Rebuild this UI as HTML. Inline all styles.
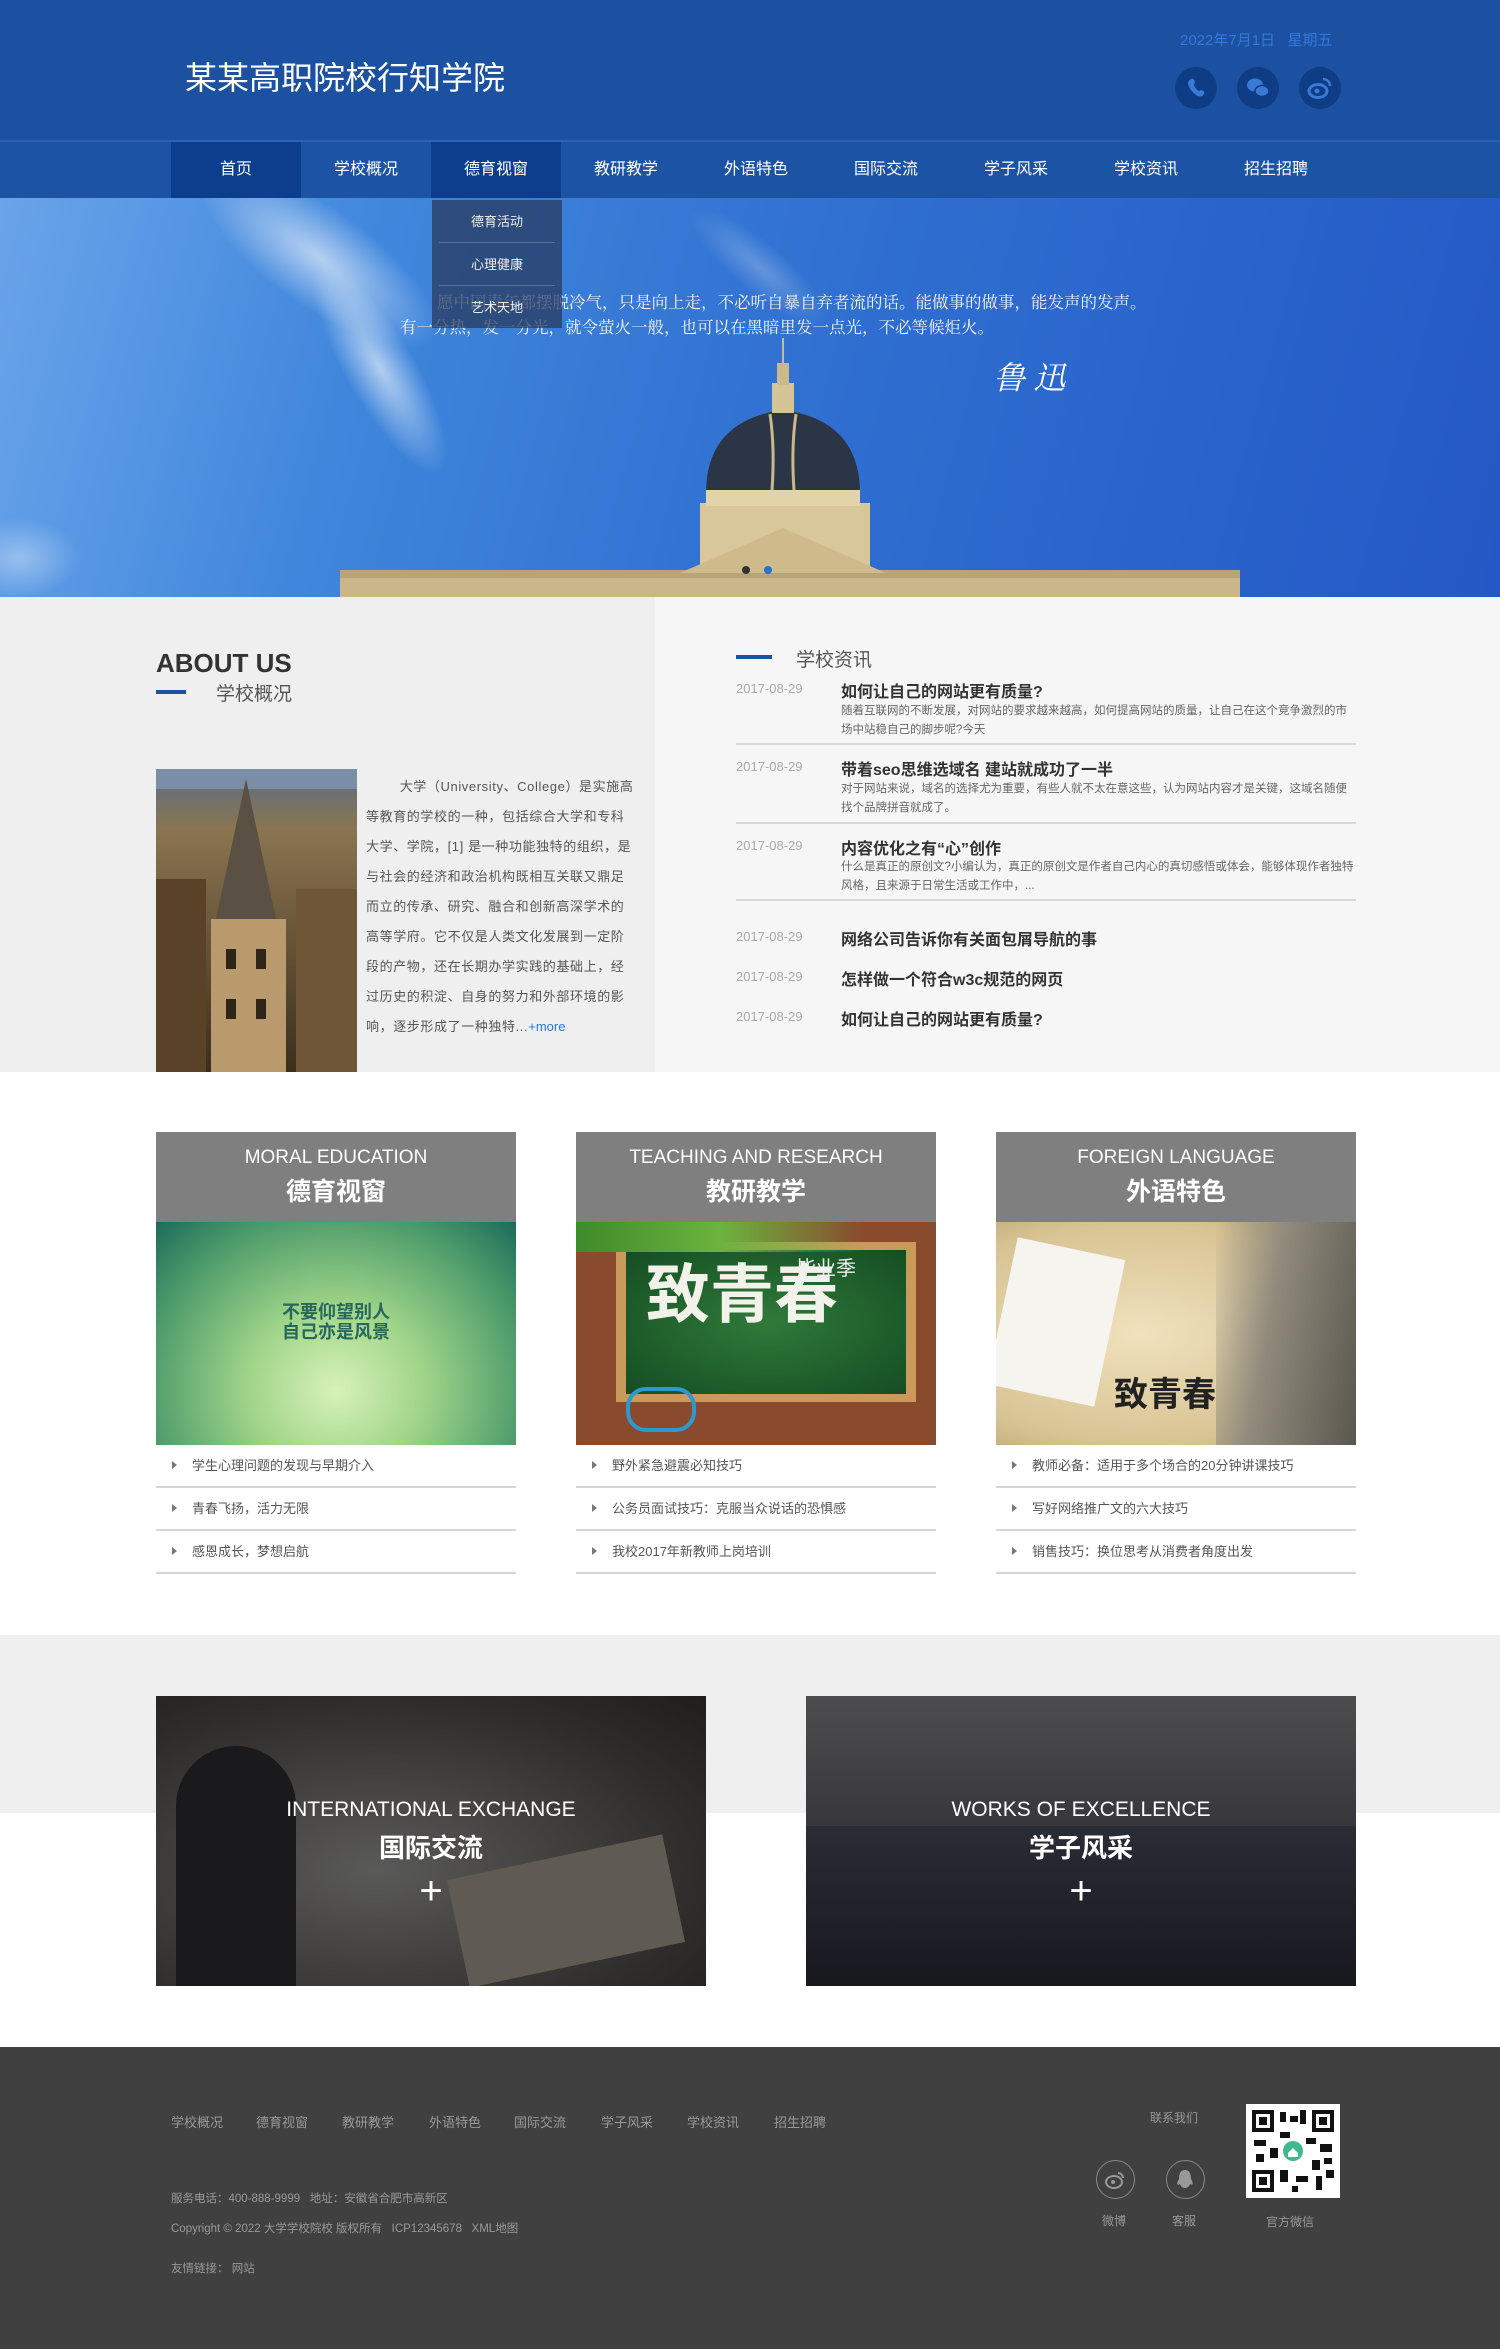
<!DOCTYPE html>
<html><head><meta charset="utf-8">
<style>
*{margin:0;padding:0;box-sizing:border-box}
body{width:1500px;height:2349px;position:relative;font-family:"Liberation Sans","Noto Sans CJK SC",sans-serif;background:#fff;overflow:hidden}
.a{position:absolute;white-space:nowrap}
.hd{position:absolute;left:0;top:0;width:1500px;height:140px;background:#1b51a0}
.nav{position:absolute;left:0;top:140px;width:1500px;height:58px;background:#1c53a5;border-top:2px solid #2a64b8}
.ni{position:absolute;top:0;width:130px;height:56px;line-height:56px;text-align:center;color:#fff;font-size:16px}
.ni.on{background:#0b3f8e}
.ic{position:absolute;width:42px;height:42px;border-radius:50%;background:#0e3c85;top:67px}
.banner{position:absolute;left:0;top:198px;width:1500px;height:399px;background:linear-gradient(105deg,#6aa4ea 0%,#3f86dc 25%,#2f6fd0 55%,#2458c6 100%);overflow:hidden}
.dd{position:absolute;left:432px;top:200px;width:130px;height:128px;background:rgba(40,55,90,.72)}
.dd div{height:43px;line-height:43px;text-align:center;color:#eee;font-size:13px;margin:0 7px;border-bottom:1px solid rgba(255,255,255,.2)}
.quote{font-family:"Liberation Serif","Noto Serif CJK SC",serif;color:#f2f4fa;font-size:16.5px}
.left{position:absolute;left:0;top:597px;width:655px;height:475px;background:#efefef}
.right{position:absolute;left:655px;top:597px;width:845px;height:475px;background:#f6f6f6}
.date{color:#aaa;font-size:13px}
.nt{color:#333;font-size:16px;font-weight:bold}
.nd{color:#666;font-size:11.5px}
.hr{position:absolute;left:736px;width:620px;height:2px;background:#d8d8d8}
.card{position:absolute;top:1132px;width:360px}
.ch{height:90px;background:#7f7f7f;color:#fff;text-align:center}
.ch .en{font-size:19px;padding-top:15px}
.ch .cn{font-size:25px;font-weight:bold;margin-top:3px}
.cimg{height:223px;position:relative;overflow:hidden}
.li{height:43px;line-height:41px;border-bottom:2px solid #d5d5d5;font-size:13px;color:#555;padding-left:36px;position:relative}
.li:before{content:"";position:absolute;left:16px;top:16px;border-left:5px solid #777;border-top:4px solid transparent;border-bottom:4px solid transparent}
.ph{position:absolute;top:1696px;width:550px;height:290px;overflow:hidden;text-align:center;color:#fff}
.ph .en{font-size:21px;margin-top:102px;position:relative}
.ph .cn{font-size:26px;font-weight:bold;margin-top:6px;position:relative}
.ph .pl{font-size:40px;margin-top:6px;position:relative;line-height:40px}
.ft{position:absolute;left:0;top:2047px;width:1500px;height:302px;background:#404040}
.fl{color:#999;font-size:13px}
</style></head><body>
<div class="hd"></div>
<div class="a" style="left:185px;top:53px;font-size:32px;color:#fff">某某高职院校行知学院</div>
<div class="a" style="left:1180px;top:29px;font-size:15px;color:#3577db">2022年7月1日&nbsp;&nbsp;&nbsp;星期五</div>
<div class="ic" style="left:1175px"><svg width="42" height="42" viewBox="0 0 42 42"><path d="M16 12c2-1 3 0 4 3l-1 3c1 3 3 5 5 6l2-1c3 1 4 2 3 4-2 3-5 3-8 1-4-3-7-7-8-11 0-2 1-4 3-5z" fill="#3a7ad6"/></svg></div>
<div class="ic" style="left:1237px"><svg width="42" height="42" viewBox="0 0 42 42"><ellipse cx="18" cy="18" rx="8" ry="6.5" fill="#3a7ad6"/><ellipse cx="25" cy="24" rx="7" ry="5.5" fill="#3a7ad6" stroke="#0e3c85" stroke-width="1.5"/></svg></div>
<div class="ic" style="left:1299px"><svg width="42" height="42" viewBox="0 0 42 42"><ellipse cx="19" cy="24" rx="9" ry="6.5" fill="none" stroke="#3a7ad6" stroke-width="3"/><circle cx="18" cy="24" r="2.5" fill="#3a7ad6"/><path d="M24 12a7 7 0 0 1 7 7" stroke="#3a7ad6" stroke-width="2.5" fill="none"/></svg></div>
<div class="nav">
<div class="ni on" style="left:171px">首页</div><div class="ni" style="left:301px">学校概况</div><div class="ni on" style="left:431px">德育视窗</div><div class="ni" style="left:561px">教研教学</div><div class="ni" style="left:691px">外语特色</div><div class="ni" style="left:821px">国际交流</div><div class="ni" style="left:951px">学子风采</div><div class="ni" style="left:1081px">学校资讯</div><div class="ni" style="left:1211px">招生招聘</div>
</div>
<div class="banner">
<svg width="1500" height="399" style="position:absolute;left:0;top:0">
<defs><radialGradient id="cl"><stop offset="0" stop-color="#fff" stop-opacity=".6"/><stop offset="1" stop-color="#fff" stop-opacity="0"/></radialGradient></defs>
<ellipse cx="320" cy="60" rx="140" ry="50" fill="url(#cl)" transform="rotate(35 320 60)"/>
<ellipse cx="380" cy="170" rx="120" ry="35" fill="url(#cl)" transform="rotate(60 380 170)"/>
<ellipse cx="760" cy="70" rx="90" ry="25" fill="url(#cl)" opacity=".4" transform="rotate(40 760 70)"/>
<ellipse cx="20" cy="360" rx="60" ry="40" fill="url(#cl)" opacity=".6"/>
<rect x="340" y="378" width="900" height="21" fill="#c9b78a"/>
<rect x="340" y="372" width="900" height="8" fill="#b7a477"/>
<rect x="700" y="305" width="170" height="70" fill="#d8c79a"/>
<polygon points="680,375 783,330 886,375" fill="#cdbb8c"/>
<rect x="706" y="290" width="154" height="18" fill="#e2d3a8"/>
<path d="M706 292 Q708 222 783 212 Q858 222 860 292Z" fill="#2c3546"/>
<path d="M770 216 Q775 250 772 292 M796 216 Q791 250 794 292" stroke="#c8b88c" stroke-width="3" fill="none"/>
<rect x="772" y="185" width="22" height="30" fill="#d5c596"/>
<rect x="777" y="165" width="12" height="22" fill="#cbb98a"/>
<line x1="783" y1="140" x2="783" y2="165" stroke="#cbb98a" stroke-width="2"/>
<circle cx="746" cy="372" r="4" fill="#333"/><circle cx="768" cy="372" r="4" fill="#2a6fd6"/>
</svg>
<div class="a quote" style="left:437px;top:91px">愿中国青年都摆脱冷气，只是向上走，不必听自暴自弃者流的话。能做事的做事，能发声的发声。</div>
<div class="a quote" style="left:400px;top:116px">有一分热，发一分光，就令萤火一般，也可以在黑暗里发一点光，不必等候炬火。</div>
<div class="a" style="left:993px;top:155px;font-size:32px;color:#fff;font-family:'Noto Serif CJK SC',serif;font-style:italic">鲁 迅</div>
</div>
<div class="dd"><div>德育活动</div><div>心理健康</div><div style="border:0">艺术天地</div></div>

<div class="left"></div><div class="right"></div>
<div class="a" style="left:156px;top:648px;font-size:26px;font-weight:bold;color:#333">ABOUT US</div>
<div class="a" style="left:156px;top:690px;width:30px;height:4px;background:#1b51a0"></div>
<div class="a" style="left:216px;top:679px;font-size:19px;color:#555">学校概况</div>
<svg class="a" style="left:156px;top:769px" width="201" height="303"><defs><linearGradient id="bd" x1="0" y1="0" x2="0" y2="1"><stop offset="0" stop-color="#5a6e88"/><stop offset=".2" stop-color="#8a7550"/><stop offset="1" stop-color="#3d2e1c"/></linearGradient></defs><rect width="201" height="303" fill="url(#bd)"/><rect x="0" y="0" width="201" height="20" fill="#7a8ea8"/><polygon points="60,150 90,10 120,150" fill="#5b5044"/><rect x="55" y="150" width="75" height="153" fill="#b89a6c"/><rect x="140" y="120" width="61" height="183" fill="#6e5636"/><rect x="0" y="110" width="50" height="193" fill="#5a4228"/><g fill="#2e2518"><rect x="70" y="180" width="10" height="20"/><rect x="100" y="180" width="10" height="20"/><rect x="70" y="230" width="10" height="20"/><rect x="100" y="230" width="10" height="20"/></g></svg>
<div class="a" style="left:366px;top:772px;width:270px;white-space:normal;font-size:13px;letter-spacing:0.6px;line-height:30px;color:#555">&nbsp;&nbsp;&nbsp;&nbsp;&nbsp;&nbsp;&nbsp;&nbsp;大学（University、College）是实施高等教育的学校的一种，包括综合大学和专科大学、学院，[1] 是一种功能独特的组织，是与社会的经济和政治机构既相互关联又鼎足而立的传承、研究、融合和创新高深学术的高等学府。它不仅是人类文化发展到一定阶段的产物，还在长期办学实践的基础上，经过历史的积淀、自身的努力和外部环境的影响，逐步形成了一种独特...<span style="color:#2a7ad6;letter-spacing:0">+more</span></div>

<div class="a" style="left:736px;top:655px;width:36px;height:4px;background:#1b51a0"></div>
<div class="a" style="left:796px;top:645px;font-size:19px;color:#555">学校资讯</div>
<div class="a date" style="left:736px;top:681px">2017-08-29</div><div class="a nt" style="left:841px;top:678px">如何让自己的网站更有质量?</div>
<div class="a nd" style="left:841px;top:702px;line-height:19px;white-space:normal;width:515px">随着互联网的不断发展，对网站的要求越来越高，如何提高网站的质量，让自己在这个竞争激烈的市场中站稳自己的脚步呢?今天</div>
<div class="hr" style="top:743px"></div>
<div class="a date" style="left:736px;top:759px">2017-08-29</div><div class="a nt" style="left:841px;top:756px">带着seo思维选域名 建站就成功了一半</div>
<div class="a nd" style="left:841px;top:780px;line-height:19px;white-space:normal;width:515px">对于网站来说，域名的选择尤为重要，有些人就不太在意这些，认为网站内容才是关键，这域名随便找个品牌拼音就成了。</div>
<div class="hr" style="top:822px"></div>
<div class="a date" style="left:736px;top:838px">2017-08-29</div><div class="a nt" style="left:841px;top:835px">内容优化之有“心”创作</div>
<div class="a nd" style="left:841px;top:858px;line-height:19px;white-space:normal;width:515px">什么是真正的原创文?小编认为，真正的原创文是作者自己内心的真切感悟或体会，能够体现作者独特风格，且来源于日常生活或工作中，...</div>
<div class="hr" style="top:899px"></div>
<div class="a date" style="left:736px;top:929px">2017-08-29</div><div class="a nt" style="left:841px;top:926px">网络公司告诉你有关面包屑导航的事</div>
<div class="a date" style="left:736px;top:969px">2017-08-29</div><div class="a nt" style="left:841px;top:966px">怎样做一个符合w3c规范的网页</div>
<div class="a date" style="left:736px;top:1009px">2017-08-29</div><div class="a nt" style="left:841px;top:1006px">如何让自己的网站更有质量?</div>

<div class="card" style="left:156px"><div class="ch"><div class="en">MORAL EDUCATION</div><div class="cn">德育视窗</div></div>
<div class="cimg" style="background:radial-gradient(ellipse at 50% 75%,#d8f2b8 0%,#9fd489 35%,#4b9a6a 75%,#1d6a5a 100%)"><div class="a" style="left:0;width:360px;text-align:center;top:80px;font-size:18px;font-weight:bold;color:#27685a;line-height:20px">不要仰望别人<br>自己亦是风景</div></div>
<div class="li">学生心理问题的发现与早期介入</div><div class="li">青春飞扬，活力无限</div><div class="li">感恩成长，梦想启航</div></div>

<div class="card" style="left:576px"><div class="ch"><div class="en">TEACHING AND RESEARCH</div><div class="cn">教研教学</div></div>
<div class="cimg" style="background:#8a4a2e"><div class="a" style="left:40px;top:20px;width:300px;height:160px;background:#c99a5a"></div><div class="a" style="left:50px;top:28px;width:280px;height:144px;background:radial-gradient(#2f7a3a,#154d22)"></div><div class="a" style="left:0;top:0;width:360px;height:30px;background:linear-gradient(90deg,#3f8a2a,#6cb33e 40%,transparent 80%)"></div><div class="a" style="left:70px;top:38px;font-size:64px;font-weight:bold;color:#f2f2ea;line-height:70px">致青春</div><div class="a" style="left:220px;top:30px;font-size:20px;color:#eee">毕业季</div><div class="a" style="left:50px;top:165px;width:70px;height:45px;border:4px solid #2a9ad0;border-radius:20px"></div></div>
<div class="li">野外紧急避震必知技巧</div><div class="li">公务员面试技巧：克服当众说话的恐惧感</div><div class="li">我校2017年新教师上岗培训</div></div>

<div class="card" style="left:996px"><div class="ch"><div class="en">FOREIGN LANGUAGE</div><div class="cn">外语特色</div></div>
<div class="cimg" style="background:radial-gradient(ellipse at 40% 50%,#f0e2bd,#d8c393 70%,#b8a274)"><div class="a" style="left:5px;top:25px;width:110px;height:150px;background:#f6f4ee;transform:rotate(12deg)"></div><div class="a" style="left:220px;top:0;width:140px;height:223px;background:linear-gradient(100deg,transparent,#8f8a7c 40%,#5a574e)"></div><div class="a" style="left:118px;top:145px;font-size:34px;font-weight:bold;color:#222">致青春</div></div>
<div class="li">教师必备：适用于多个场合的20分钟讲课技巧</div><div class="li">写好网络推广文的六大技巧</div><div class="li">销售技巧：换位思考从消费者角度出发</div></div>

<div class="a" style="left:0;top:1635px;width:1500px;height:178px;background:#efefef"></div>
<div class="ph" style="left:156px;background:radial-gradient(ellipse at 40% 60%,#5a5a58,#2e2c2a 70%,#1f1e1d)"><div class="a" style="left:20px;top:50px;width:120px;height:240px;background:#1a1a1c;border-radius:60px 60px 0 0"></div><div class="a" style="left:300px;top:160px;width:220px;height:110px;background:#5f5a52;transform:rotate(-12deg)"></div><div class="en">INTERNATIONAL EXCHANGE</div><div class="cn">国际交流</div><div class="pl">+</div></div>
<div class="ph" style="left:806px;background:linear-gradient(180deg,#4d4c4e 0%,#3a3a3e 40%,#222226 100%)"><div class="a" style="left:0;top:130px;width:550px;height:160px;background:linear-gradient(180deg,#2a2c36,#17181e)"></div><div class="en">WORKS OF EXCELLENCE</div><div class="cn">学子风采</div><div class="pl">+</div></div>

<div class="ft"></div>
<div class="a fl" style="left:171px;top:2112px">学校概况</div><div class="a fl" style="left:256px;top:2112px">德育视窗</div><div class="a fl" style="left:342px;top:2112px">教研教学</div><div class="a fl" style="left:429px;top:2112px">外语特色</div><div class="a fl" style="left:514px;top:2112px">国际交流</div><div class="a fl" style="left:601px;top:2112px">学子风采</div><div class="a fl" style="left:687px;top:2112px">学校资讯</div><div class="a fl" style="left:774px;top:2112px">招生招聘</div>
<div class="a fl" style="left:171px;top:2190px;font-size:11.5px">服务电话：400-888-9999&nbsp;&nbsp;&nbsp;地址：安徽省合肥市高新区</div>
<div class="a fl" style="left:171px;top:2220px;font-size:11.5px">Copyright © 2022 大学学校院校 版权所有&nbsp;&nbsp;&nbsp;ICP12345678&nbsp;&nbsp;&nbsp;XML地图</div>
<div class="a fl" style="left:171px;top:2260px;font-size:11.5px">友情链接：&nbsp;网站</div>
<div class="a fl" style="left:1150px;top:2109px;font-size:12px">联系我们</div>
<div class="a" style="left:1096px;top:2160px;width:39px;height:39px;border:1px solid #888;border-radius:50%"><svg width="37" height="37"><ellipse cx="17" cy="21" rx="8" ry="6" fill="none" stroke="#999" stroke-width="2"/><circle cx="16" cy="21" r="2" fill="#999"/><path d="M21 12a5 5 0 0 1 5 5" stroke="#999" stroke-width="2" fill="none"/></svg></div>
<div class="a" style="left:1166px;top:2160px;width:39px;height:39px;border:1px solid #888;border-radius:50%"><svg width="37" height="37"><path d="M18 9c-5 0-6 5-6 9-2 3-2 5-1 6l2-1c1 3 3 4 5 4s4-1 5-4l2 1c1-1 1-3-1-6 0-4-1-9-6-9z" fill="#999"/></svg></div>
<div class="a fl" style="left:1102px;top:2212px;font-size:12px">微博</div><div class="a fl" style="left:1172px;top:2212px;font-size:12px">客服</div>
<svg class="a" style="left:1246px;top:2104px" width="94" height="94" viewBox="0 0 94 94"><rect width="94" height="94" fill="#fff"/><g fill="#111"><rect x="6" y="6" width="22" height="22"/><rect x="66" y="6" width="22" height="22"/><rect x="6" y="66" width="22" height="22"/></g><g fill="#fff"><rect x="10" y="10" width="14" height="14"/><rect x="70" y="10" width="14" height="14"/><rect x="10" y="70" width="14" height="14"/></g><g fill="#111"><rect x="13" y="13" width="8" height="8"/><rect x="73" y="13" width="8" height="8"/><rect x="13" y="73" width="8" height="8"/><rect x="34" y="8" width="6" height="10"/><rect x="44" y="12" width="8" height="6"/><rect x="54" y="6" width="6" height="14"/><rect x="34" y="28" width="10" height="6"/><rect x="8" y="36" width="12" height="6"/><rect x="24" y="44" width="8" height="10"/><rect x="60" y="34" width="10" height="6"/><rect x="74" y="40" width="12" height="8"/><rect x="66" y="56" width="8" height="10"/><rect x="34" y="66" width="8" height="12"/><rect x="50" y="72" width="12" height="6"/><rect x="70" y="72" width="6" height="14"/><rect x="80" y="66" width="8" height="8"/><rect x="46" y="82" width="6" height="6"/><rect x="10" y="50" width="8" height="8"/><rect x="78" y="54" width="8" height="6"/></g><circle cx="47" cy="47" r="10" fill="#3cba8c"/><path d="M42 49l5-5 5 5v4h-10z" fill="#fff"/></svg>
<div class="a fl" style="left:1266px;top:2213px;font-size:12px">官方微信</div>
</body></html>
